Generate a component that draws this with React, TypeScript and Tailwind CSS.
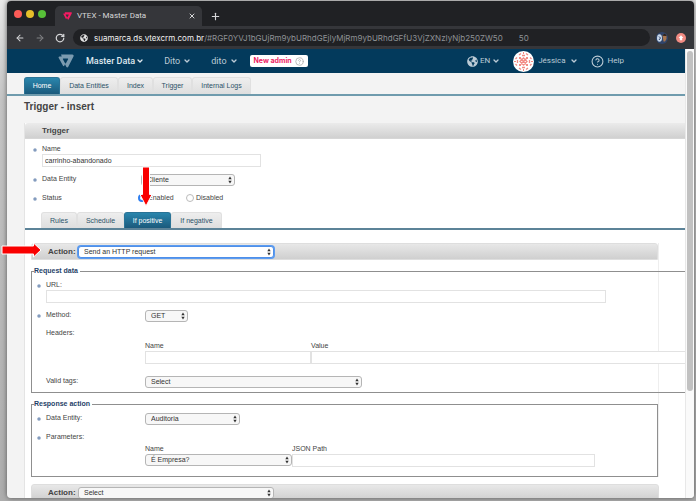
import React, { ReactNode } from 'react'
import clsx from 'clsx'
import { ArrowLeft, ArrowRight, ChevronDown, CircleHelp, Plus, RotateCw, X } from 'lucide-react'
import { FaGlobeAmericas } from 'react-icons/fa'

interface SelectProps {
  id: string
  value: string
  className?: string
  focused?: boolean
}

function Select({ id, value, className, focused }: SelectProps) {
  return (
    <div className={clsx('relative h-3', className)}>
      <select
        id={id}
        defaultValue={value}
        className={clsx(
          'block h-3 w-full appearance-none rounded-[3px] border pl-[5px] text-[7px] leading-[10px] text-[#333] outline-none',
          focused ? 'border-[#4f8fe8] bg-white ring-1 ring-[#5b9bf0]' : 'border-[#b5b5b5] bg-[#f7f7f7]'
        )}
      >
        <option>{value}</option>
      </select>
      <svg className="pointer-events-none absolute right-[3px] top-[2px] h-2 w-1" viewBox="0 0 4 8" fill="#333">
        <path d="M2 0.6 3.7 3.2H0.3ZM2 7.4 3.7 4.8H0.3Z" />
      </svg>
    </div>
  )
}

function TextInput({ id, value, className }: { id: string; value?: string; className?: string }) {
  return (
    <input
      id={id}
      type="text"
      defaultValue={value}
      className={clsx('block h-[13px] border border-[#e2e2e2] bg-white px-[2px] text-[7px] leading-[11px] text-[#333] outline-none', className)}
    />
  )
}

function Bullet() {
  return <span className="mt-1 block size-[4px] rounded-full border border-[#b4c3d8] bg-[#6f8bb3]" />
}

interface RowProps {
  label: string
  htmlFor?: string
  bullet?: boolean
  className?: string
  children?: ReactNode
}

function Row({ label, htmlFor, bullet, className, children }: RowProps) {
  return (
    <div className={clsx('grid grid-cols-[9px_99px_1fr]', className)}>
      <div>{bullet && <Bullet />}</div>
      {htmlFor ? <label htmlFor={htmlFor}>{label}</label> : <span>{label}</span>}
      <div>{children}</div>
    </div>
  )
}

function Tab({ label, active, className }: { label: string; active?: boolean; className?: string }) {
  return (
    <button
      type="button"
      className={clsx(
        'rounded-t-[3px] border border-b-0 text-center text-[7px]',
        active
          ? 'border-[#2a7396] bg-linear-to-b from-[#2a86ad] to-[#1b5a7c] text-white'
          : 'border-[#e0e0e0] bg-linear-to-b from-[#eeeeee] to-[#dedede] text-[#2c5268]',
        className
      )}
    >
      {label}
    </button>
  )
}

function VtexLogo({ className }: { className?: string }) {
  return (
    <svg className={className} viewBox="0 0 32 28" fill="currentColor">
      <path
        fillRule="evenodd"
        d="M6 1H28.500C31 1 32 3 31 5L20.500 25.500C19.500 27.500 17.500 27.500 16.500 25.500L14 20.500 12.500 23.500C12 24.500 10.500 24.500 10 23.500L1.500 8C0.500 6.500 1.500 5 3 5H7.500ZM10.500 9C9.800 9 9.400 9.700 9.800 10.400L14.200 18.500C14.600 19.200 15.400 19.200 15.800 18.500L20.200 10.400C20.600 9.700 20.200 9 19.500 9Z"
      />
    </svg>
  )
}

function Identicon() {
  return (
    <svg className="size-[21px]" viewBox="0 0 21 21">
      <circle cx="10.500" cy="10.500" r="10.500" fill="#fff" />
      <g fill="none" stroke="#f28a83" strokeWidth="1.300">
        <path d="M7 7 14 14M14 7 7 14M7 10.500 10.500 7 14 10.500 10.500 14Z" />
        <path d="M6 4 8 2.500M13 2.500 15 4M6 17 8 18.500M13 18.500 15 17M2.500 8 4 6.500M2.500 13 4 14.500M18.500 8 17 6.500M18.500 13 17 14.500" />
        <path d="M9 4.500H12M9 16.500H12M4.500 9V12M16.500 9V12" />
      </g>
      <path fill="#f28a83" d="M6 6H8V8H6ZM13 6H15V8H13ZM6 13H8V15H6ZM13 13H15V15H13ZM10 1H11V3H10ZM10 18H11V20H10ZM1 10H3V11H1ZM18 10H20V11H18Z" />
    </svg>
  )
}

function BrowserChrome() {
  return (
    <div className="shrink-0 font-[Roboto,sans-serif]">
      <div className="flex h-[25px] items-end bg-[#202124]">
        <div className="flex h-[25px] w-12 items-center gap-1 pl-[7px]">
          <span className="size-2 rounded-full bg-[#fc5b57]" />
          <span className="size-2 rounded-full bg-[#e5bf2a]" />
          <span className="size-2 rounded-full bg-[#57c038]" />
        </div>
        <div className="flex h-5 w-[147px] items-center rounded-t-[5px] bg-[#35363a] pl-2 pr-[6px] text-[8px] text-[#d5d6d8]">
          <VtexLogo className="mr-[5px] h-2 w-[9px] text-[#f71963]" />
          <span className="flex-1">VTEX - Master Data</span>
          <button type="button" aria-label="Close tab">
            <X className="size-2" strokeWidth={3} />
          </button>
        </div>
        <button type="button" aria-label="New tab" className="flex h-5 items-center pl-2 text-[#d5d6d8]">
          <Plus className="size-[11px]" strokeWidth={2.5} />
        </button>
      </div>
      <div className="flex h-[23px] items-center bg-[#35363a] pl-2 pr-2 text-[#d5d6d8]">
        <button type="button" aria-label="Back" className="mr-[10px]">
          <ArrowLeft className="size-[10px]" strokeWidth={2.5} />
        </button>
        <button type="button" aria-label="Forward" className="mr-[10px] text-[#808184]">
          <ArrowRight className="size-[10px]" strokeWidth={2.5} />
        </button>
        <button type="button" aria-label="Reload" className="mr-2">
          <RotateCw className="size-[10px]" strokeWidth={3} />
        </button>
        <div className="flex h-[17px] min-w-0 flex-1 items-center whitespace-pre rounded-full bg-[#202124] pl-[7px] font-[Inter,sans-serif] text-[8px] text-[#8e9195]">
          <FaGlobeAmericas className="mr-[6px] size-2 text-[#e2e2e2]" />
          <span className="text-[#f1f1f1]">suamarca.ds.vtexcrm.com.br</span>
          <span>/#RGF0YVJ1bGUjRm9ybURhdGEjIyMjRm9ybURhdGFfU3VjZXNzIyNjb250ZW50</span>
          <span className="ml-4">50</span>
        </div>
        <svg className="ml-[6px] size-3" viewBox="0 0 12 12">
          <circle cx="6" cy="6" r="6" fill="#30456b" />
          <ellipse cx="3.500" cy="6" rx="2.500" ry="3.800" fill="#c9d8ea" />
          <path d="M3 4.500 4.500 6 3 8" stroke="#30456b" fill="none" />
          <path d="M6.500 3.500Q8.500 0.500 10.500 3.500V7L9 9.500H7.500Z" fill="#a8764e" />
          <path d="M6.500 3.800Q8.500 -0.500 10.800 4Z" fill="#2a211f" />
        </svg>
        <svg className="ml-2 size-[10px]" viewBox="0 0 10 10">
          <circle cx="5" cy="5" r="5" fill="#f28b82" />
          <path d="M5 2.200 7.400 5H6.200V7.300H3.800V5H2.600Z" fill="#fff" />
        </svg>
      </div>
    </div>
  )
}

function TopBar() {
  return (
    <header className="flex h-6 items-center bg-[#033a5c] pl-[51px] pr-[61px] font-[Roboto,sans-serif] text-[8px] text-[#bccbd6]">
      <VtexLogo className="mr-3 h-[14px] w-4 text-[#7c9bb0]" />
      <button type="button" className="mr-5 flex items-center gap-px text-[9px] font-medium text-[#dfe8ee]">
        Master Data <ChevronDown className="size-2" strokeWidth={4} />
      </button>
      <button type="button" className="mr-5 flex items-center gap-[3px] text-[9px]">
        Dito <ChevronDown className="size-2" strokeWidth={4} />
      </button>
      <button type="button" className="mr-3 flex items-center gap-[3px] text-[9px]">
        dito <ChevronDown className="size-2" strokeWidth={4} />
      </button>
      <a
        href="#new-admin"
        className="flex h-3 items-center gap-[3px] rounded-[2px] bg-white px-1 font-[Inter,sans-serif] text-[7px] font-bold text-[#ec1c63]"
      >
        New admin <CircleHelp className="size-[9px] text-[#aaa]" strokeWidth={2} />
      </a>
      <button type="button" className="ml-auto mr-[13px] flex items-center gap-[2px]">
        <FaGlobeAmericas className="size-[11px]" />
        EN <ChevronDown className="size-2" strokeWidth={4} />
      </button>
      <button type="button" className="mr-[13px] flex items-center gap-1">
        <Identicon />
        Jéssica <ChevronDown className="size-2" strokeWidth={4} />
      </button>
      <a href="#help" className="flex items-center gap-1">
        <CircleHelp className="size-[13px]" strokeWidth={2} /> Help
      </a>
    </header>
  )
}

function ActionBar({ id, value, focused }: { id: string; value: string; focused?: boolean }) {
  return (
    <div className="flex h-[17px] items-center rounded-t-[3px] border border-[#dedede] bg-linear-to-b from-[#e8e8e8] to-[#cfcfcf] pl-4">
      <label htmlFor={id} className="w-[30px] text-[8px] font-bold">
        Action:
      </label>
      <Select id={id} value={value} focused={focused} className="w-[196px]" />
    </div>
  )
}

function RequestData() {
  return (
    <fieldset className="-mr-10 mt-[6px] border border-[#8f8f8f] pb-[4px] pl-[5px]">
      <legend className="-ml-[3px] pr-[2px] font-bold text-[#1f3f68]">Request data</legend>
      <Row label="URL:" htmlFor="url" bullet className="mt-1" />
      <TextInput id="url" className="ml-[9px] w-[560px]" />
      <Row label="Method:" htmlFor="method" bullet className="mt-[7px]">
        <Select id="method" value="GET" className="w-[43px]" />
      </Row>
      <Row label="Headers:" className="mt-[6px]" />
      <div className="ml-[108px] mt-[3px] flex">
        <div className="w-[166px]">
          <label htmlFor="header-name">Name</label>
          <TextInput id="header-name" className="w-full" />
        </div>
        <div className="flex-1">
          <label htmlFor="header-value">Value</label>
          <TextInput id="header-value" className="w-full" />
        </div>
      </div>
      <Row label="Valid tags:" htmlFor="valid-tags" className="mt-3">
        <Select id="valid-tags" value="Select" className="w-[217px]" />
      </Row>
    </fieldset>
  )
}

function ResponseAction() {
  return (
    <fieldset className="mt-[6px] border border-[#8f8f8f] pb-[9px] pl-[5px]">
      <legend className="-ml-[3px] pr-[2px] font-bold text-[#1f3f68]">Response action</legend>
      <Row label="Data Entity:" htmlFor="response-entity" bullet className="mt-1">
        <Select id="response-entity" value="Auditoria" className="w-[95px]" />
      </Row>
      <Row label="Parameters:" bullet className="mt-[7px]" />
      <div className="ml-[108px] mt-[2px] flex pr-[62px]">
        <div className="w-[147px]">
          <label htmlFor="param-name">Name</label>
          <Select id="param-name" value="É Empresa?" className="w-full" />
        </div>
        <div className="flex-1">
          <label htmlFor="param-path">JSON Path</label>
          <TextInput id="param-path" className="w-full" />
        </div>
      </div>
    </fieldset>
  )
}

function TriggerForm() {
  return (
    <section className="ml-[17px] border-l border-[#e4e4e4] bg-white">
      <h2 className="flex h-4 items-center rounded-tl-[3px] border-b border-[#d6d6d6] bg-linear-to-b from-[#ebebeb] to-[#d0d0d0] pl-[17px] text-[8px] font-bold text-[#444]">
        Trigger
      </h2>
      <div className="pl-2 pt-[5px]">
        <Row label="Name" htmlFor="name" bullet />
        <TextInput id="name" value="carrinho-abandonado" className="ml-[9px] w-[219px]" />
        <Row label="Data Entity" htmlFor="entity" bullet className="mt-[7px]">
          <Select id="entity" value="Cliente" className="w-[94px]" />
        </Row>
        <Row label="Status" bullet className="mt-[7px]">
          <div className="-ml-[3px] flex items-center">
            <label className="flex w-12 items-center gap-[2px]">
              <input
                type="radio"
                name="status"
                defaultChecked
                className="size-2 appearance-none rounded-full border border-[#bbb] bg-white checked:border-2 checked:border-[#2f7ff0]"
              />
              Enabled
            </label>
            <label className="flex items-center gap-[2px]">
              <input type="radio" name="status" className="size-2 appearance-none rounded-full border border-[#bbb] bg-white" />
              Disabled
            </label>
          </div>
        </Row>
      </div>
      <div className="mt-[9px] flex border-b-2 border-[#5c8398] pl-4">
        <Tab label="Rules" className="h-4 w-9" />
        <Tab label="Schedule" className="h-4 w-[47px]" />
        <Tab label="If positive" active className="h-4 w-[47px]" />
        <Tab label="If negative" className="h-4 w-[51px]" />
      </div>
      <div className="ml-[6px] mr-[26px] mt-[13px] border-r border-[#eee]">
        <ActionBar id="action-1" value="Send an HTTP request" focused />
        <RequestData />
        <ResponseAction />
      </div>
      <div className="ml-[6px] mr-[26px] mt-[7px]">
        <ActionBar id="action-2" value="Select" />
      </div>
    </section>
  )
}

// Red callout arrows laid over the form
function Callouts() {
  return (
    <>
      <svg className="absolute left-[139px] top-[166px] h-[42px] w-[14px]" viewBox="0 0 14 42">
        <path d="M3.500 1H10.500V28.500H13L7 40 1 28.500H3.500Z" fill="#f90000" stroke="#fff" strokeWidth="1" />
      </svg>
      <svg className="absolute left-px top-[242px] h-4 w-[41px]" viewBox="0 0 41 16">
        <path d="M1 4H32.500V1L40 8 32.500 15V12H1Z" fill="#f90000" stroke="#fff" strokeWidth="1" />
      </svg>
    </>
  )
}

export default function App() {
  return (
    <div className="relative h-screen overflow-hidden bg-linear-to-b from-[#e9e9e9] via-[#c4c4c4] via-20% to-[#adadad] pb-[3px] pl-[7px] pr-[2px] pt-px font-['Liberation_Sans',Arial,sans-serif] text-[7px] leading-[10px] text-[#444]">
      <div className="flex h-full flex-col overflow-hidden rounded-[4px] shadow-[0_0_5px_#555]">
        <BrowserChrome />
        <div className="flex min-h-0 flex-1 bg-[#f3f3f3]">
          <main className="min-w-0 flex-1 overflow-hidden">
            <TopBar />
            <nav className="flex border-b-2 border-[#6f9bad] pl-[17px] pt-1">
              <Tab label="Home" active className="h-[17px] w-9" />
              <Tab label="Data Entities" className="h-[17px] w-[58px]" />
              <Tab label="Index" className="h-[17px] w-[35px]" />
              <Tab label="Trigger" className="h-[17px] w-[39px]" />
              <Tab label="Internal Logs" className="h-[17px] w-[59px]" />
            </nav>
            <h1 className="mb-[5px] pl-[17px] text-[10px] font-bold leading-[22px] text-[#444]">Trigger - insert</h1>
            <TriggerForm />
          </main>
          <div className="w-[9px] border-l border-[#e8e8e8] bg-[#fafafa] pl-px pt-[2px]">
            <div className="h-[76%] w-[6px] rounded-full bg-[#c1c1c1]" />
          </div>
        </div>
      </div>
      <Callouts />
    </div>
  )
}
